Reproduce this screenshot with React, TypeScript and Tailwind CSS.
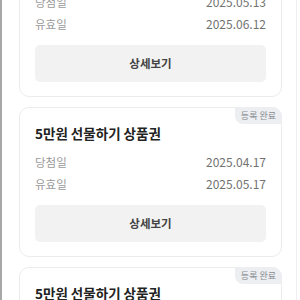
import React from "react";

const FONT = { fontFamily: '"Noto Sans CJK KR", "Noto Sans", sans-serif' };

function Card({ title, won, valid, badge }: { title: string; won: string; valid: string; badge?: boolean }) {
  return (
    <div className="relative rounded-[10px] border border-[#ececec] bg-white px-[15px] pt-[14px] pb-[14px]">
      {badge && (
        <div className="absolute right-[-1px] top-[-1px] rounded-tr-[10px] rounded-bl-[8px] bg-[#eceef1] px-[6px] h-[17px] flex items-center text-[9px] leading-none text-[#8a8d92]">
          등록 완료
        </div>
      )}
      <div className="text-[13.5px] leading-[22px] font-bold text-[#222]">{title}</div>
      <div className="mt-[8px] flex flex-col gap-[2px] leading-[20px]">
        <div className="flex justify-between items-center">
          <span className="text-[11.5px] text-[#9a9a9a]">당첨일</span>
          <span className="text-[12px] text-[#727272]">{won}</span>
        </div>
        <div className="flex justify-between items-center">
          <span className="text-[11.5px] text-[#9a9a9a]">유효일</span>
          <span className="text-[12px] text-[#727272]">{valid}</span>
        </div>
      </div>
      <div className="mt-[11px] h-[37px] rounded-[5px] bg-[#f2f2f2] flex items-center justify-center text-[11.5px] font-semibold text-[#444]">
        상세보기
      </div>
    </div>
  );
}

export default function App() {
  return (
    <div className="h-[300px] w-[300px] overflow-hidden bg-white relative" style={FONT}>
      <div className="absolute left-0 top-0 h-full w-[2px] bg-[#a8a8a8]" />
      <div className="absolute left-[296px] top-0 h-full w-[1px] bg-[#eeeeee]" />
      <div className="mt-[-53px] ml-[19px] w-[263px] flex flex-col gap-[10px]">
        <Card title="5만원 선물하기 상품권" won="2025.05.13" valid="2025.06.12" badge />
        <Card title="5만원 선물하기 상품권" won="2025.04.17" valid="2025.05.17" badge />
        <Card title="5만원 선물하기 상품권" won="2025.04.17" valid="2025.05.17" badge />
      </div>
    </div>
  );
}
